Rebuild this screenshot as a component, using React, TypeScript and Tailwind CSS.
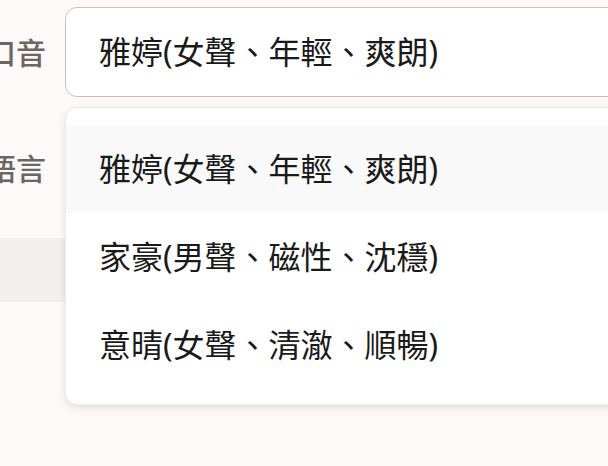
import React from "react";

const options = [
  "雅婷(女聲、年輕、爽朗)",
  "家豪(男聲、磁性、沈穩)",
  "意晴(女聲、清澈、順暢)",
];

export default function App() {
  const selected = 0;

  return (
    <div
      className="relative w-[608px] h-[466px] overflow-hidden bg-[#fdf9f8]"
      style={{ fontFamily: '"Noto Sans", "Noto Sans CJK TC", sans-serif' }}
    >
      {/* 口音 row */}
      <div className="flex items-center gap-[19px] pt-[7px]">
        <div className="w-[46px] shrink-0 flex justify-end overflow-hidden">
          <span className="whitespace-nowrap text-[30px] font-medium text-[#6b6661]">口音</span>
        </div>
        <div className="flex-1 h-[90px] shrink-0 min-w-[600px] flex items-center pl-[33px] bg-white border-[1.5px] border-[#c5c1bc] rounded-[12px]">
          <span className="whitespace-nowrap text-[32px] text-[#1a1a1a]">{options[selected]}</span>
        </div>
      </div>

      {/* 語言 row */}
      <div className="flex items-center gap-[19px] mt-[26px] h-[90px]">
        <div className="w-[46px] shrink-0 flex justify-end overflow-hidden">
          <span className="whitespace-nowrap text-[30px] font-medium text-[#6b6661]">語言</span>
        </div>
        <div className="flex-1" />
      </div>

      {/* band */}
      <div className="mt-[25px] h-[64px] bg-[#f2f0ef]" />

      {/* dropdown menu */}
      <div className="absolute left-[65px] top-[107px] w-[600px] pt-[17px] pb-[15px] bg-white rounded-[12px] border border-[#eeebe9] shadow-[0_3px_8px_rgba(0,0,0,0.1)]">
        {options.map((o, i) => (
          <div
            key={o}
            className={`h-[88px] flex items-center pl-[33px] ${i === selected ? "bg-[#f9f9f9]" : ""}`}
          >
            <span className="whitespace-nowrap text-[32px] text-[#1a1a1a]">{o}</span>
          </div>
        ))}
      </div>
    </div>
  );
}
